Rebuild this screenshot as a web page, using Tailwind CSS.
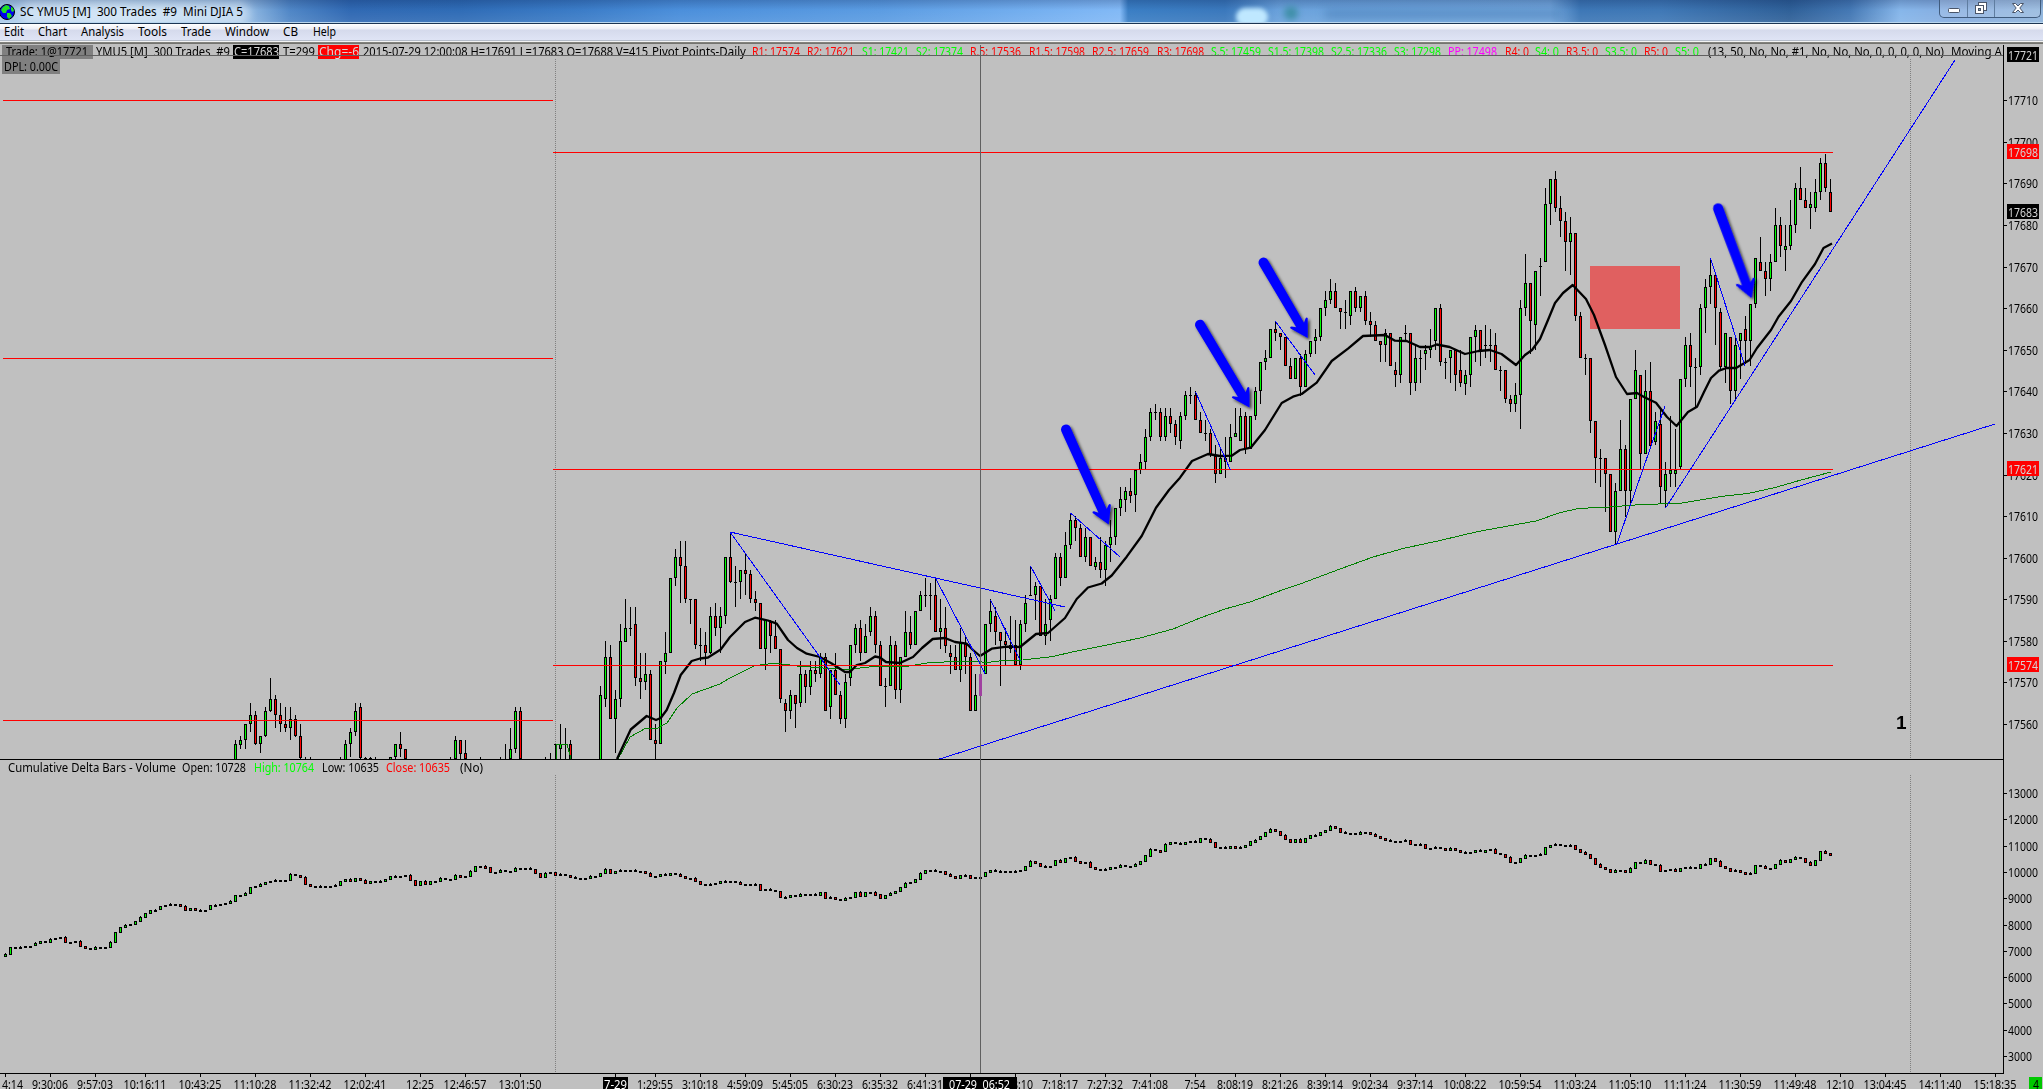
<!DOCTYPE html>
<html lang="en">
<head>
    <meta charset="UTF-8">
    <meta name="viewport" content="width=device-width, initial-scale=1.0">
    <title>SC YMU5 [M] 300 Trades #9 Mini DJIA 5</title>
    <script src="https://cdn.jsdelivr.net/npm/@tailwindcss/browser@4"></script>
</head>
<body class="bg-[#c0c0c0] overflow-hidden font-['Noto_Sans','Liberation_Sans',sans-serif] text-[12.5px] text-black">
    <div class="flex flex-col w-[2043px] h-[1089px] overflow-hidden">
        <!-- Title bar -->
        <header class="relative flex items-start justify-between h-[24px] shrink-0 border-b border-[#1c3553] overflow-hidden bg-[linear-gradient(90deg,#a9c9ea_0px,#b4d4f0_120px,#9cc2e8_240px,#4f86c6_290px,#3069b3_350px,#2f6cb6_460px,#3b7cc7_580px,#4b8fdb_680px,#5b9ce2_880px,#78b2f2_1060px,#82b9f6_1120px,#3a7ec4_1128px,#3a78bc_1225px,#6aa2dc_1280px,#74a8de_1550px,#3d77b6_1580px,#3f78b6_1660px,#2f6098_1790px,#4478b4_1850px,#86b6ea_1900px,#86ade0_1950px,#8fb4dc_2043px)]">
            <div class="absolute inset-x-0 top-0 h-[22px] bg-[linear-gradient(180deg,rgba(0,20,70,0.22),rgba(0,0,0,0)_45%,rgba(255,255,255,0.08))]"></div>
            <div class="absolute left-[20px] top-[3px] w-[230px] h-[22px] rounded-full bg-white/40 blur-[5px]"></div>
            <div class="absolute left-[1236px] top-[8px] w-[32px] h-[18px] rounded-full bg-[#bfe8ff] blur-[2px]"></div>
            <div class="absolute left-[1284px] top-[6px] w-[14px] h-[14px] rounded-full bg-[#3f8fa8] blur-[3px]"></div>
            <div class="absolute left-[1325px] top-[9px] w-[235px] h-[10px] bg-[#3a6ea8]/40 blur-[4px]"></div>
            <div class="absolute inset-x-0 top-[22px] h-px bg-[#b9d6ee]"></div>
            <div class="relative flex">
                <svg class="w-[16px] h-[20px]" viewBox="0 0 16 20">
                    <circle cx="7" cy="12" r="7.5" fill="#0000f0" stroke="#000" stroke-width="1"/>
                    <path d="M3 7l3-2 3 1 1 3-3 1-1 3-3 0-2-3zM11 7l2 1 1 3-2 1-1-2zM7 13l3 0 2 3-3 3-2-2z" fill="#20e020"/>
                </svg>
                <svg class="w-[300px] h-[22px]" viewBox="16 0 300 22">
                    <text x="20" y="16" textLength="223" lengthAdjust="spacingAndGlyphs" xml:space="preserve">SC YMU5 [M]  300 Trades  #9  Mini DJIA 5</text>
                </svg>
            </div>
            <div class="relative flex w-[102px] h-[18px] mr-[2px] rounded-b-[5px] border border-t-0 border-[#405c7e] bg-white/15">
                <div class="w-[28px] border-r border-[#5f7da0] flex justify-center">
                    <svg class="w-[16px] h-[17px]" viewBox="0 0 16 17"><rect x="2.5" y="8.5" width="11" height="4" rx="1" fill="#fff" stroke="#4a5568"/></svg>
                </div>
                <div class="w-[27px] border-r border-[#5f7da0] flex justify-center">
                    <svg class="w-[16px] h-[17px]" viewBox="0 0 16 17" fill="#fff" stroke="#4a5568"><rect x="5.5" y="2.5" width="8" height="8"/><rect x="2.5" y="5.5" width="8" height="8"/><rect x="5.5" y="8.5" width="2" height="2" fill="#8ab"/></svg>
                </div>
                <div class="flex-1 flex justify-center">
                    <svg class="w-[16px] h-[17px]" viewBox="0 0 16 17"><path d="M2.5 3.500h3l2.500 2.500 2.500-2.500h3l-3.700 4.500 3.700 4.500h-3l-2.500-2.500-2.500 2.500h-3l3.700-4.500z" fill="#fff" stroke="#4a5568"/></svg>
                </div>
            </div>
        </header>

        <!-- Menu -->
        <nav class="h-[20px] shrink-0 bg-[linear-gradient(180deg,#ffffff_0px,#eceef6_5px,#d5daec_6px,#dfe4f5_16px,#b4bcc9_16px,#b4bcc9_17px,#f2f2f2_17px,#f2f2f2_18px,#8a8a84_18px,#6c6c68_20px)]">
            <svg id="menu" class="w-[400px] h-[18px]" viewBox="0 24 400 18"></svg>
        </nav>

        <!-- Chart panes -->
        <main class="flex-1">
            <svg id="chart" class="w-[2043px] h-[1045px]" viewBox="0 44 2043 1045" shape-rendering="crispEdges">
                <defs>
                    <filter id="shadow" x="-30%" y="-30%" width="170%" height="170%">
                        <feDropShadow dx="2" dy="2" stdDeviation="1.8" flood-color="#000" flood-opacity="0.7"/>
                    </filter>
                    <clipPath id="pricePane"><rect x="0" y="44" width="2003" height="715"/></clipPath>
                </defs>
                <rect x="1590" y="266" width="90" height="63" fill="#e06060"/>
                <path d="M555.500 59V759M555.500 775V1073M1910.500 59V759M1910.500 775V1073" stroke="#808080" stroke-dasharray="1 1"/>
                <g id="bars" clip-path="url(#pricePane)"></g>
                <g id="delta"></g>

                <g fill="none" clip-path="url(#pricePane)">
                    <!-- slow average -->
                    <path stroke="#008000" stroke-width="1" d="M556 759V744H567L571 759M618 759L630 737L646 728L656 729L667 723L677 708L692 694L720 684L730 678L755 665.700L775 663L797 666L823 668L847 669.500L873 666.500L903 667L930 662.500L973 661L987 662.500L1003 660.500L1023 660L1053 656.500L1070 652.500L1107 645L1140 638L1173 629L1200 618L1225 609L1250 602L1285 589L1300 584L1340 569L1373 557L1403 548.500L1440 540.500L1478 531.500L1536 521L1559 513L1578 508.500L1609 507L1635 505L1682 503L1721 496.500L1748 493.500L1775 487.500L1801 480L1831 472"/>
                    <!-- fast average -->
                    <path stroke="#000" stroke-width="2.300" stroke-linejoin="round" shape-rendering="geometricPrecision" d="M617 759L630.700 729.500L646.700 716L656 720L660.700 718L666.700 710L674 693L680.700 675L691.700 661L700 658.500L708 657.500L720.700 649.500L730 637L745 622L755 617.700L768 620.500L776.700 623.700L788 640L797 648L806.700 653.700L820 657L831.700 663.500L845 672L850 672L856.700 665L865 663L875 656.500L880 657.500L886 662L900 663L913 657L922 648L932.700 639L945 638L955 642L966.700 643.700L973 650L980 656L991.700 648.700L1006.700 646.700L1020 647L1036 634L1048 633L1065 618L1076.700 599L1088 587.500L1101.700 583.500L1111.700 575.500L1126.700 556.700L1141.700 536L1156 507.700L1169 490L1180 477.700L1192 461L1208 454L1220 456L1231.700 455.700L1240 450L1250.700 447.700L1265 430L1281.700 403L1293 396.700L1301.700 394L1316.700 382.700L1331.700 361L1348 348.700L1363 336L1385 335L1395 340.700L1406.700 341L1420 347L1430 347L1436.700 344.500L1449.600 347L1465 354L1478.500 351L1490 350L1501.500 354L1516 365L1525 355L1532 350L1540 339L1548 320L1555 303L1563 293L1572.700 285L1586 299L1594 315L1605 345L1616 377L1627 394L1637 393L1644 397L1656 402.700L1667 417L1676.500 426L1688 412L1697 406.700L1704 392L1711 378L1719 370.700L1726.500 368L1736 368L1749.600 360L1757 348L1771 330L1778.500 316.700L1791 301L1801.500 282.700L1815 264L1823.500 248L1832 243.500"/>
                    <!-- pivots -->
                    <path stroke="#ff0000" d="M3 100.500H553M3 358.500H553M3 720.500H553M553 152.500H1833M553 469.500H1833M553 665.500H1833"/>
                    <!-- trend lines -->
                    <path stroke="#0000ff" d="M730 532L1065 607M730 532L840 685M935.500 578L985 673.500M990.500 600L1020.500 661M1030.500 566L1055 611M1070.500 513L1120 557M1195.500 392L1230.500 470M1275.500 321.500L1315 375M1710.500 258L1745 366M1616.500 545L1665 406M1665.500 508L1955 60M938 759.500L1995 424"/>
                </g>

                <g id="arrows" filter="url(#shadow)" shape-rendering="geometricPrecision"></g>

                <path stroke="#000" d="M0 759.500H2003M0 1073.500H2003M2003.500 45V1074"/>
                <path id="ticks" stroke="#000"/>
                <text x="1896" y="728.500" font-family="Liberation Sans" font-weight="bold" font-size="19">1</text>
                <g id="labels" shape-rendering="auto"></g>
                <path stroke="#606060" d="M0 55.500H2003M980.500 45V1073"/>
                <path stroke="#a040a0" d="M980.500 674V696" stroke-width="3"/>
            </svg>
        </main>
    </div>

    <script>
        const NS = 'http://www.w3.org/2000/svg';

        function add(parent, tag, attrs, content) {
            const el = document.createElementNS(NS, tag);
            for (const key in attrs) el.setAttribute(key, attrs[key]);
            if (content !== undefined) el.textContent = content;
            parent.appendChild(el);
            return el;
        }

        // Text stretched between x1 and x2 with an optional background box
        function label(parent, text, x1, x2, y, color = '#000', box) {
            if (box) add(parent, 'rect', { x: box[0], y: box[1], width: box[2] - box[0], height: box[3] - box[1], fill: box[4] });
            const t = add(parent, 'text', { x: x1, y, fill: color, textLength: x2 - x1, lengthAdjust: 'spacingAndGlyphs' }, text);
            t.style.whiteSpace = 'pre';
        }

        // Bars: "type high top bottom low" in thirds of a pixel below y0.
        // g = up, r = down, d = wick only, +n = skip n bars
        const series = [
            { x: 235, y0: 500, data: 'g 720 732 780 780,g 708 720 734 746,g 672 673 720 746,g 609 645 673 695,r 633 645 733 734,g 708 709 733 758,g 621 633 709 710,g 534 597 634 635,r 585 598 646 683,r 609 646 673 695,r 621 672 685 695,g 621 657 685 719,r 645 657 709 710,r 672 708 775 776,d 770 778 778,d 770 778 778,+5,d 770 778 778,g 720 732 780 780,g 684 697 733 771,g 609 633 697 708,r 609 621 773 776,d 770 773 778,d 770 773 778,d 770 778 778,+2,g 770 772 778 778,g 732 732 772 776,r 696 732 747 770,r 747 748 778 778,+8,d 770 778 778,g 708 720 778 778,r 720 721 761 778,r 720 759 778 778,+2,d 770 778 778,+3,d 770 778 778,d 732 778 778,g 684 747 778 778,g 621 633 748 759,r 621 633 778 778,+4,d 770 778 778,d 759 778 778,d 732 733 778,g 672 733 748 778,d 684 733 778,r 720 733 778 778,+5,g 558 585 779 779,g 423 471 598 621,r 435 471 658 658,g 570 597 658 759,g 372 423 598 621,g 297 384 425 426,d 321 385 407,r 321 373 535 557,r 459 535 547 597,g 459 522 547 570,r 510 522 721 721,r 672 720 733 778,g 484 484 733 733,g 396 459 485 522,g 235 235 460 460,g 147 171 235 257,r 123 171 199 308,r 123 199 298 308,d 298 298 372,r 298 298 436 446,d 384 436 482,r 396 436 460 495,g 321 349 460 461,r 309 349 385 407,g 321 349 385 459,g 171 172 349 372,r 97 172 247 248,d 198 247 321,g 210 211 247 297,r 160 211 223 284,r 210 223 298 309,r 273 298 310 333,r 310 310 448 448,g 360 360 448 510,r 360 365 409 459,r 360 409 448 448,r 448 448 598 609,r 597 609 634 695,g 570 586 634 657,r 585 586 611 684,g 484 522 610 621,r 510 522 560 609,g 484 510 560 585,r 484 510 523 546,g 459 472 523 534,r 459 472 634 634,g 510 511 622 657,r 459 511 586 586,r 573 586 658 671,g 522 547 658 684,g 436 436 535 557,g 372 384 436 459,r 360 384 460 482,g 372 409 460 460,g 321 349 397 407,r 333 349 436 459,r 423 436 559 559,d 534 559 621,g 409 436 559 559,r 423 436 571 597,g 472 472 571 609,g 333 397 472 472,r 349 397 436 446,g 334 334 436 436,g 273 286 334 334,d 234 286 321,d 248 286 360,r 235 286 397 397,g 298 385 397 446,r 321 385 437 459,r 435 460 472 522,r 435 472 511 511,g 384 425 511 546,r 409 433 472 522,r 460 472 634 634,g 522 586 634 634,d 522 586 597,g 372 373 523 523,g 298 334 373 396,r 321 349 397 435,r 397 397 423 557,r 385 424 436 495,g 349 436 448 459,r 360 436 495 495,g 360 373 495 510,g 286 310 373 396,d 199 286 286,g 247 259 286 360,r 259 259 409 409,g 298 373 409 435,g 286 298 361 423,g 160 172 298 298,r 160 172 235 257,g 97 136 235 235,g 38 61 136 147' },
            { x: 1075, y0: 240, data: 'r 828 841 865 903,r 853 865 952 952,g 865 891 952 965,r 892 892 979 979,g 952 967 980 990,r 891 967 991 1014,g 903 916 991 1037,g 841 892 916 965,g 805 805 892 914,g 741 778 805 827,g 741 754 779 815,r 714 754 767 789,g 690 690 766 815,g 642 667 691 702,g 567 592 667 690,g 504 517 592 603,d 492 517 540,r 504 517 592 603,g 504 529 592 603,r 504 529 553 578,r 541 553 592 614,g 517 529 604 627,g 453 466 529 540,d 441 466 492,r 453 466 541 541,r 516 541 580 580,d 541 580 603,r 567 580 645 652,r 614 649 703 728,g 625 655 703 703,r 592 655 667 714,g 552 592 667 667,g 504 580 592 592,g 504 529 604 604,r 517 529 627 642,g 529 529 628 628,g 441 454 529 540,g 367 367 454 491,g 330 355 367 389,g 268 268 355 355,r 243 268 280 302,r 280 280 292 330,r 292 292 379 379,r 355 379 418 418,g 355 355 418 418,r 342 355 442 467,g 330 343 442 442,g 304 304 343 352,g 267 292 304 342,g 205 205 292 302,g 153 181 205 227,g 117 154 181 191,r 129 154 205 205,r 205 205 217 267,d 180 217 267,g 154 154 229 255,r 141 154 205 216,g 169 169 205 216,r 153 169 244 255,r 216 244 256 291,r 244 256 304 304,r 304 304 316 365,g 267 280 316 365,r 280 280 379 379,r 365 391 406 440,g 292 292 406 429,d 255 280 302,r 280 280 430 465,g 316 355 430 453,d 330 355 429,g 316 330 343 390,g 267 318 331 353,g 205 205 304 330,r 192 205 367 378,d 355 367 417,g 330 331 355 429,r 330 331 406 452' },
            { x: 1460, y0: 140, data: 'r 631 691 730 741,g 691 705 731 765,g 592 592 705 740,g 555 569 592 665,r 569 569 631 677,d 555 616 655,d 568 616 667,r 580 616 691 691,d 679 690 752,r 691 691 778 790,r 766 778 793 815,g 730 766 793 815,g 480 505 766 866,g 343 430 505 527,r 430 430 544 641,g 394 394 556 629,d 354 379 467,g 144 193 367 367,g 118 118 193 255,r 93 118 205 216,r 168 205 244 290,r 216 244 307 392,g 231 280 307 404,r 280 280 529 542,r 516 529 655 655,d 643 655 705,r 655 655 842 878,r 842 842 955 1028,d 928 955 1040,r 955 955 1003 1115,r 1003 1003 1177 1177,g 1028 1053 1177 1215,g 841 928 1053 1053,r 915 928 1053 1130,g 778 778 1053 1090,g 630 691 778 778,r 705 705 943 988,g 690 754 943 943,r 667 754 917 927,g 816 842 905 915,r 805 853 1042 1088,g 966 1003 1053 1102,g 828 991 1003 1040,g 866 991 1003 1040,g 718 718 980 989,g 591 616 718 741,r 579 616 680 741,d 655 680 802,g 492 505 680 705,g 417 442 505 579,g 354 406 442 491,r 406 406 505 614,r 505 517 680 693,g 580 580 680 729,r 592 592 754 792,g 591 616 754 780,g 580 580 604 716,r 529 568 604 672,g 493 493 604 677,g 355 355 493 504,r 291 367 394 394,r 366 394 418 467,g 342 367 418 453,g 204 256 367 367,r 231 256 319 352,g 255 319 331 392,g 180 256 319 330,g 129 145 256 278,r 82 145 181 181,r 144 181 205 205,g 156 193 205 266,g 117 156 205 216,g 54 70 156 180,r 41 70 145 155,r 117 156 217 217' }
        ];

        const bars = document.getElementById('bars');
        for (const s of series) {
            let x = s.x;
            for (const item of s.data.split(',')) {
                if (item[0] === '+') {
                    x += 5 * Number(item.slice(1));
                    continue;
                }
                const [type, ...v] = item.split(' ');
                const y = v.map(n => Math.round(s.y0 + n / 3));
                const low = y[y.length - 1];
                add(bars, 'rect', { x, y: y[0], width: 1, height: Math.max(low - y[0], 1) });
                if (type === 'd') {
                    add(bars, 'rect', { x: x - 1, y: y[1], width: 3, height: 1 });
                } else {
                    const h = Math.max(y[2] - y[1], 3);
                    add(bars, 'rect', { x: x - 1, y: y[1], width: 3, height: h });
                    add(bars, 'rect', { x, y: y[1] + 1, width: 1, height: h - 2, fill: type === 'g' ? '#00ff00' : '#ff0000' });
                }
                x += 5;
            }
        }

        // Cumulative delta closes, thirds of a pixel below y0
        const closes = [
            { x: 5, y0: 860, v: [283,262,262,260,257,257,250,244,244,236,235,232,247,247,244,259,265,268,262,262,262,247,217,202,196,193,184,172,160,151,149,139,136,133,132,138,151,145,151,152,149,136,136,133,130,124,105,107,100,82,79,73,67,64,61,61,61,43,46,52,73,79,79,79,79,78,76,64,58,65,55,61,70,64,67,64,58,49,52,49,46,61,76,64,73,64,64,55,58,58,46,52,49,34,19,17,22,37,37,31,34,34,25,26,25,28,40,52,40,37,46,43,46,52,55,54,55,49,49,40,28,40,34,31,31,31,34,34,40,49,49,43,46,40,43,49,55,55,64,73,76,73,70,64,64,64,67,73,72,72,73,91,88,91,94,112,112,106,109,103,104,103,106,97,115,112,118,121,115,112,97,109,97,95,103,115,106,100,94,82,70,67,58,40,31,31,34,34,43,49,55,46,46,55,52,50,37,31,34] },
            { x: 1000, y0: 800, v: [214,214,214,214,211,199,184,190,199,199,197,181,187,175,172,184,190,187,202,208,211,208,202,202,196,199,199,193,184,166,146,149,154,133,127,130,133,127,124,127,115,118,127,142,142,145,139,145,142,136,124,119,109,97,88,94,106,118,127,118,127,115,106,106,97,91,79,85,97,100,99,103,97,97,103,109,115,121,124,127,124,121,133,133,133,145,145,142,145,151,145,151,157,158,157,151,154,149,148,160,163,172,187,187,175,166,167,166,163,142,136,133,134,138,136,148,157,163,175,193,202,208,217,211,210,217,205,187,190,181,193,196,214,211,208,214,205,202,202,205,193,193,175,184,199,205,214,210,217,223,220,196,199,205,205,193,181,187,178,172,175,187,196,181,154,160,166] }
        ];

        const delta = document.getElementById('delta');
        let open = 956.5;
        for (const s of closes) {
            s.v.forEach((v, i) => {
                const close = s.y0 + v / 3;
                const x = s.x + i * 5;
                const top = Math.round(Math.min(open, close));
                const h = Math.max(Math.round(Math.abs(close - open)) + 1, 2);
                add(delta, 'rect', { x: x - 1, y: top, width: 3, height: h });
                if (i % 3 === 0) add(delta, 'rect', { x, y: top - 1, width: 1, height: h + 1 });
                if (h > 2) add(delta, 'rect', { x, y: top + 1, width: 1, height: h - 2, fill: close < open ? '#00ff00' : '#ff0000' });
                open = close;
            });
        }

        // Arrows, tail to tip
        const arrows = document.getElementById('arrows');
        [[1066, 429.5, 1108.7, 524.5], [1200, 324.7, 1249.5, 407.5], [1263.5, 262.5, 1307.7, 338], [1718, 208.3, 1751.5, 298]].forEach(([x1, y1, x2, y2]) => {
            const len = Math.hypot(x2 - x1, y2 - y1);
            const angle = Math.atan2(y2 - y1, x2 - x1) * 180 / Math.PI;
            add(arrows, 'path', {
                fill: '#0000ff',
                transform: `translate(${x2} ${y2}) rotate(${angle})`,
                d: `M0 0L-17 -10Q-19 -10 -18 -8L-15 -4.500L${-len} -5A5 5 0 0 0 ${-len} 5L-15 4.500L-18 8Q-19 10 -17 10Z`
            });
        });

        // Price scale
        const labels = document.getElementById('labels');
        let ticks = '';
        for (let p = 17710, i = 0; p >= 17560; p -= 10, i++) {
            const y = Math.round(100.3 + i * 41.58);
            label(labels, p, 2008, 2038, y + 5);
            ticks += `M2004 ${y}.5h3`;
        }
        [[17721, 55, '#000'], [17698, 152, '#ff0000'], [17683, 212, '#000'], [17621, 469, '#ff0000'], [17574, 665, '#ff0000']].forEach(([p, y, bg]) => {
            label(labels, p, 2008, 2038, y + 5, '#d4d4d4', [2007, y - 8, 2039, y + 7, bg]);
        });

        // Delta scale
        for (let v = 13000, i = 0; v >= 3000; v -= 1000, i++) {
            const y = Math.round(793 + i * 26.3);
            label(labels, v, 2008, v >= 10000 ? 2038 : 2032, y + 5);
            ticks += `M2004 ${y}.5h3`;
        }

        // Time scale
        [[5, '9:14:14'], [50, '9:30:06'], [95, '9:57:03'], [145, '10:16:11'], [200, '10:43:25'], [255, '11:10:28'], [310, '11:32:42'], [365, '12:02:41'], [420, '12:25'], [465, '12:46:57'], [520, '13:01:50'], [655, '1:29:55'], [700, '3:10:18'], [745, '4:59:09'], [790, '5:45:05'], [835, '6:30:23'], [880, '6:35:32'], [925, '6:41:31'], [970, ''], [1015, '6:58:10'], [1060, '7:18:17'], [1105, '7:27:32'], [1150, '7:41:08'], [1195, '7:54'], [1235, '8:08:19'], [1280, '8:21:26'], [1325, '8:39:14'], [1370, '9:02:34'], [1415, '9:37:14'], [1465, '10:08:22'], [1520, '10:59:54'], [1575, '11:03:24'], [1630, '11:05:10'], [1685, '11:11:24'], [1740, '11:30:59'], [1795, '11:49:48'], [1840, '12:10'], [1885, '13:04:45'], [1940, '14:11:40'], [1995, '15:18:35']].forEach(([x, t]) => {
            const w = { 8: 43, 7: 36, 5: 28, 4: 21, 0: 0 }[t.length];
            if (t) label(labels, t, x - w / 2, x + w / 2, 1089);
            ticks += `M${x}.5 1074v3`;
        });
        ticks += 'M615.5 1074v3';
        document.getElementById('ticks').setAttribute('d', ticks);
        label(labels, '7-29', 604, 627, 1089, '#fff', [603, 1077, 628, 1089, '#000']);
        label(labels, '07-29  06:52', 949, 1010, 1089, '#fff', [943, 1077, 1017, 1089, '#000']);
        label(labels, '4', 2033, 2039, 1089, '#000', [2029, 1077, 2042, 1089, '#00c800']);

        // Study values above the price pane
        const R = '#ff0000', G = '#00ff00', K = '#000', M = '#ff00ff';
        label(labels, 'Trade: 1@17721', 6, 88, 56, K, [2, 45, 93, 59, '#808080']);
        label(labels, 'YMU5 [M]  300 Trades  #9', 96, 230, 56);
        label(labels, 'C=17683', 234, 279, 56, '#d8d8d8', [233, 45, 279, 59, '#000']);
        label(labels, 'T=299', 283, 315, 56);
        label(labels, 'Chg=-6', 319, 359, 56, '#d8d8d8', [318, 45, 359, 59, '#ff0000']);
        [
            ['2015-07-29 12:00:08 H=17691 L=17683 O=17688 V=415', 363, 648, K],
            ['Pivot Points-Daily', 652, 746, K],
            ['R1: 17574', 752, 800, R], ['R2: 17621', 807, 854, R],
            ['S1: 17421', 862, 909, G], ['S2: 17374', 916, 963, G],
            ['R.5: 17536', 970, 1021, R], ['R1.5: 17598', 1029, 1085, R],
            ['R2.5: 17659', 1092, 1149, R], ['R3: 17698', 1157, 1204, R],
            ['S.5: 17459', 1211, 1261, G], ['S1.5: 17398', 1268, 1324, G],
            ['S2.5: 17336', 1331, 1387, G], ['S3: 17298', 1394, 1441, G],
            ['PP: 17498', 1448, 1497, M], ['R4: 0', 1505, 1529, R],
            ['S4: 0', 1535, 1559, G], ['R3.5: 0', 1566, 1598, R],
            ['S3.5: 0', 1605, 1637, G], ['R5: 0', 1644, 1668, R],
            ['S5: 0', 1675, 1699, G],
            ['(13, 50, No, No, #1, No, No, No, 0, 0, 0, 0, No)', 1708, 1944, K],
            ['Moving A', 1951, 2002, K]
        ].forEach(([t, x1, x2, c]) => label(labels, t, x1, x2, 56, c));
        label(labels, 'DPL: 0.00C', 4, 58, 71, K, [2, 59, 60, 74, '#808080']);

        // Delta pane header
        [
            ['Cumulative Delta Bars - Volume', 8, 176, K], ['Open: 10728', 182, 246, K],
            ['High: 10764', 254, 314, G], ['Low: 10635', 322, 379, K],
            ['Close: 10635', 386, 450, R], ['(No)', 460, 483, K]
        ].forEach(([t, x1, x2, c]) => label(labels, t, x1, x2, 772, c));

        const menu = document.getElementById('menu');
        [['Edit', 4, 24], ['Chart', 38, 67], ['Analysis', 81, 124], ['Tools', 138, 167], ['Trade', 181, 211], ['Window', 225, 269], ['CB', 283, 298], ['Help', 313, 336]]
            .forEach(([t, x1, x2]) => label(menu, t, x1, x2, 36));
    </script>
</body>
</html>
